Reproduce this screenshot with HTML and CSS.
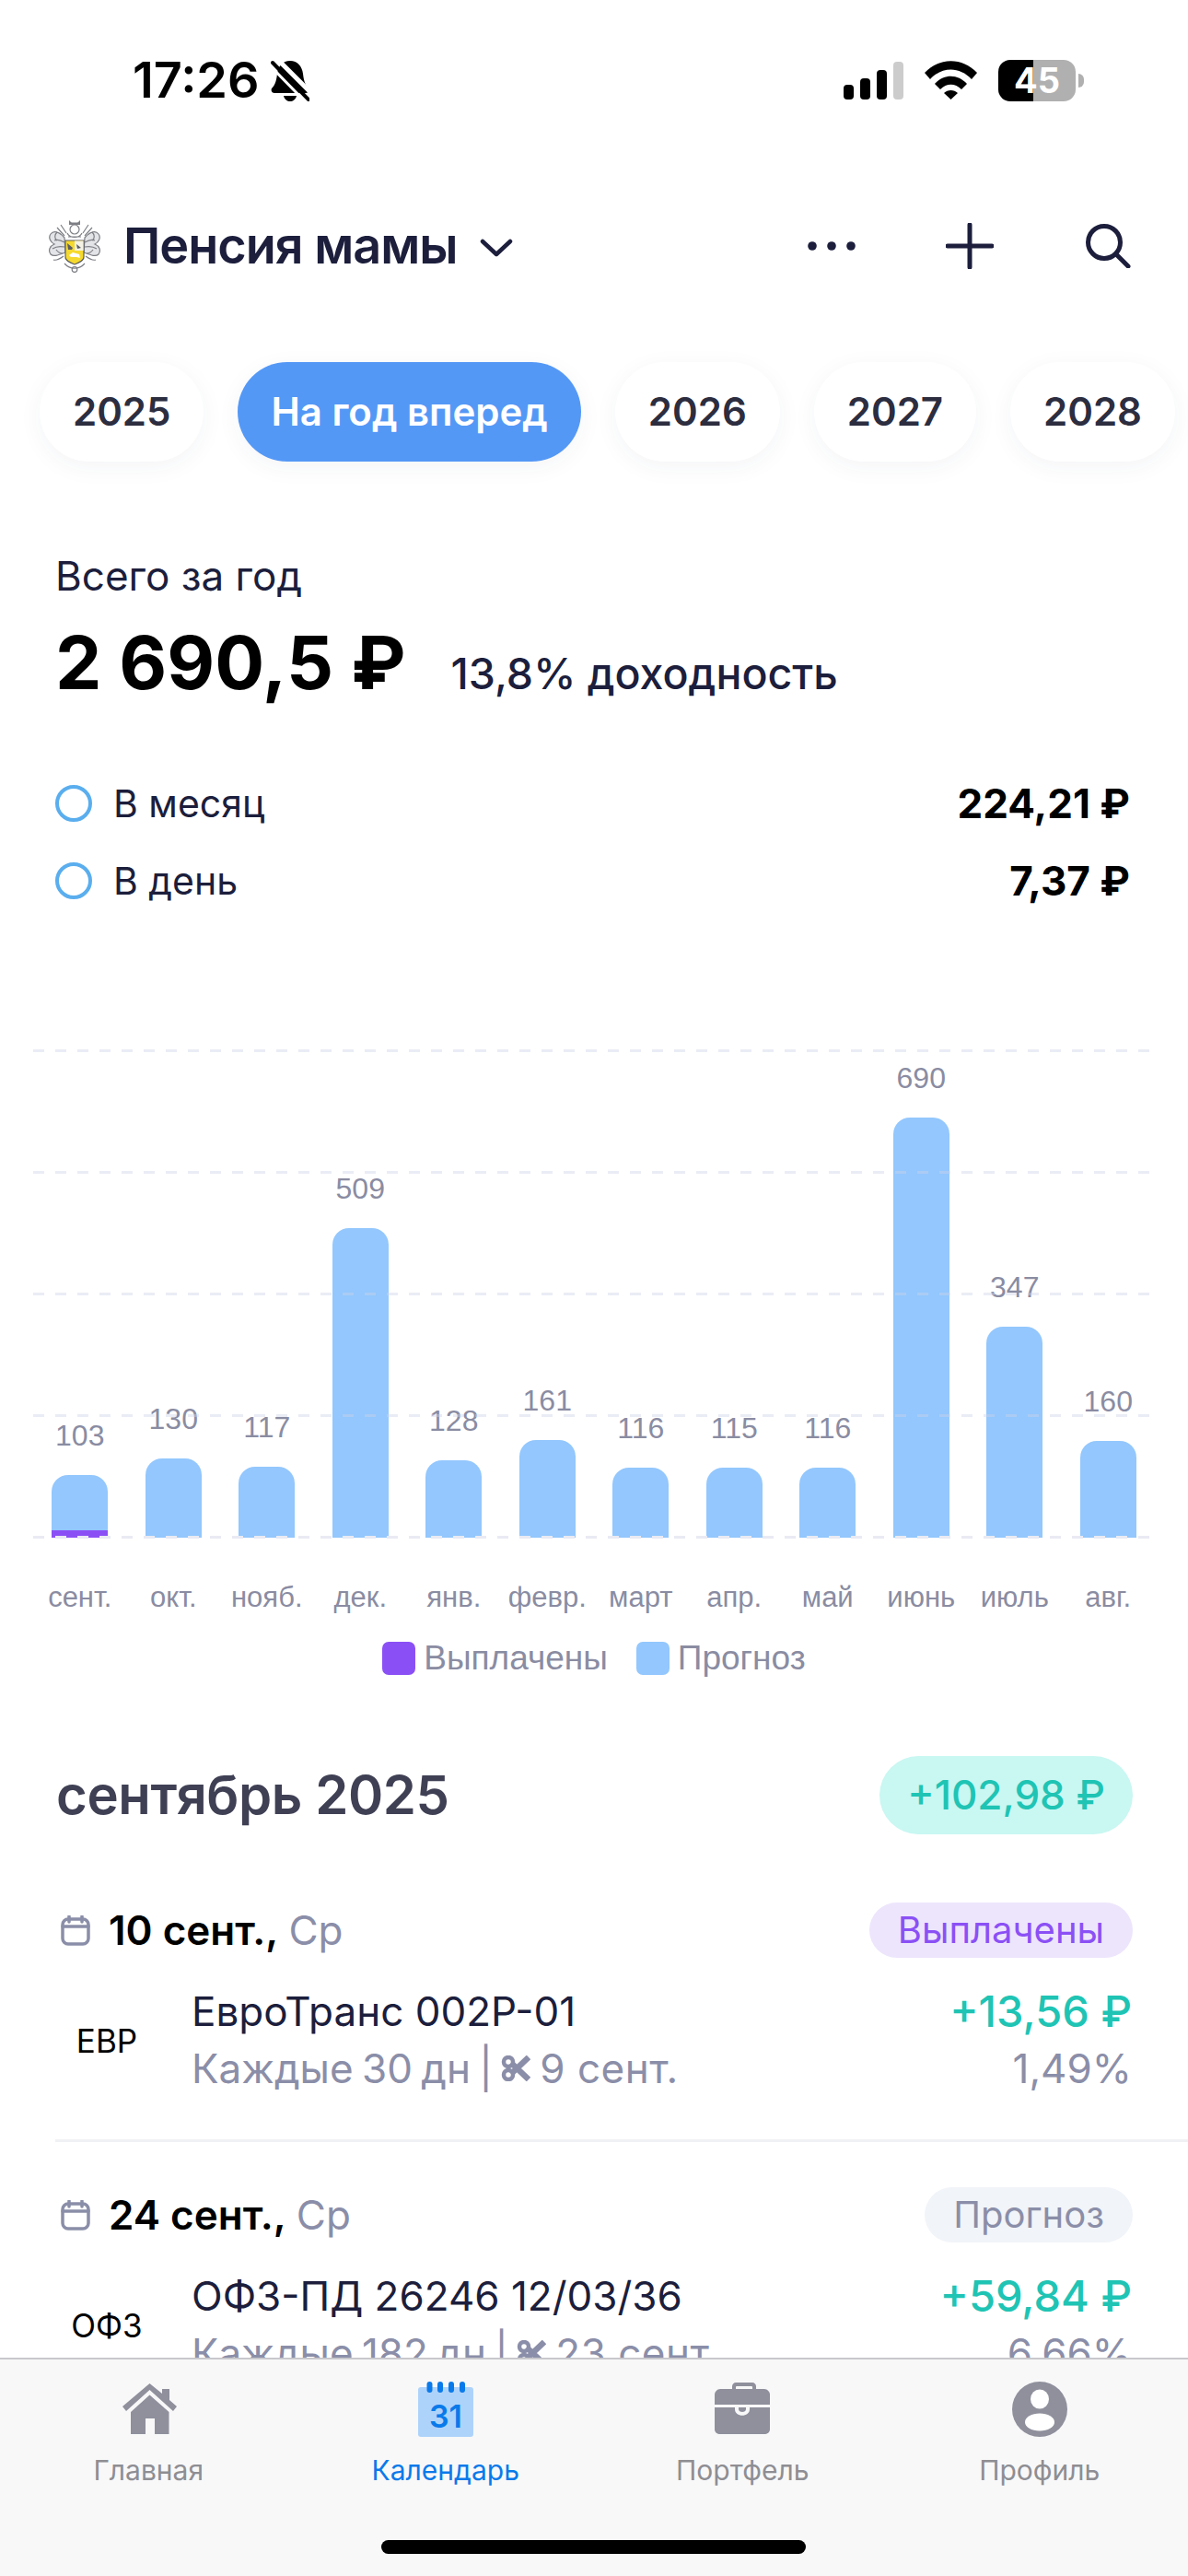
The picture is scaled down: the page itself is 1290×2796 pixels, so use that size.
FILE: index.html
```html
<!DOCTYPE html>
<html lang="ru">
<head>
<meta charset="utf-8">
<title>Пенсия мамы</title>
<link rel="stylesheet" href="styles.css">
</head>
<body>
<div class="app">
  <div class="status">
    <div class="status-left">
      <span class="time">17:26</span>
      <svg class="bell" width="42" height="46" viewBox="0 0 42 46"><path d="M21 1C29 1 34 7 35 15C36 24 38 28 41 31C42 33 41 36 38 36H4C1 36 0 33 1 31C4 28 6 24 7 15C8 7 13 1 21 1Z" fill="#000"/><path d="M14 39H28C27 43 24 45 21 45S15 43 14 39Z" fill="#000"/><path d="M6 -2L46 38" stroke="#fff" stroke-width="5"/><path d="M2 3L41 43" stroke="#000" stroke-width="4" stroke-linecap="round"/><path d="M-1 6L38 46" stroke="#fff" stroke-width="3"/></svg>
    </div>
    <div class="status-right">
      <div class="signal"><i class="s1"></i><i class="s2"></i><i class="s3"></i><i class="s4"></i></div>
      <svg width="57" height="42" viewBox="0 0 57 42"><path d="M0 13C16-4 41-4 57 13L51 20C38 6 19 6 6 20Z M11 25C21 14 36 14 46 25L40 31C33 24 24 24 17 31Z M21 35C25 31 32 31 36 35L28.500 42Z" fill="#000"/></svg>
      <div class="battery"><div class="battery-body"><span>45</span></div><div class="battery-tip"></div></div>
    </div>
  </div>

  <header class="header">
    <div class="account">
      <svg class="logo" width="62" height="58" viewBox="0 0 62 58">
        <g fill="#e3e4e7" stroke="#7d7f85" stroke-width="1.200">
          <path d="M20 20C14 13 8 12 5 16C2 20 5 25 9 27C4 29 2 34 5 38C8 41 13 39 21 36Z"/>
          <path d="M42 20C48 13 54 12 57 16C60 20 57 25 53 27C58 29 60 34 57 38C54 41 49 39 41 36Z"/>
        </g>
        <g fill="none" stroke="#7d7f85" stroke-width="1.200">
          <path d="M20 25C15 22 11 22 9 23M20 30C15 29 10 30 7 32M19 40C15 43 11 45 8 44M12 9L20 18M16 6L22 15"/>
          <path d="M42 25C47 22 51 22 53 23M42 30C47 29 52 30 55 32M43 40C47 43 51 45 54 44M50 9L42 18M46 6L40 15"/>
          <path d="M12 14C9 17 9 21 12 23M50 14C53 17 53 21 50 23M11 33C13 36 16 37 18 37M51 33C49 36 46 37 44 37"/>
          <circle cx="31" cy="11" r="5"/>
          <path d="M23 15C26 21 36 21 39 15M25 4H37M24 19H38"/>
          <path d="M20 48C26 55 36 55 42 48"/>
        </g>
        <path d="M25 1L28 4H34L37 1V6H25Z" fill="#7d7f85"/>
        <circle cx="31" cy="54.500" r="2.800" fill="none" stroke="#7d7f85" stroke-width="1.200"/>
        <path d="M21 23H41V41C41 45 36 47 31 49C26 47 21 45 21 41Z" fill="#f6d92e" stroke="#5c5d62" stroke-width="1.200"/>
        <path d="M31 23.500H40.500V34H31Z" fill="#f4f2e4"/>
        <path d="M23 26L29 31L28 33H24ZM33 27L38 31L34 32Z" fill="#5c5d62"/>
        <path d="M25 39L29 36L36 38L37 42L33 41H27Z" fill="#fff"/>
      </svg>
      <span class="account-name">Пенсия мамы</span>
      <svg class="chevron" width="36" height="20" viewBox="0 0 36 20"><path d="M3 3L18 17L33 3" fill="none" stroke="#1c1e3c" stroke-width="4.500" stroke-linecap="round" stroke-linejoin="round"/></svg>
    </div>
    <div class="actions">
      <svg class="a-dots" width="52" height="10" viewBox="0 0 52 10"><circle cx="5" cy="5" r="4.800" fill="#1c1e3c"/><circle cx="26" cy="5" r="4.800" fill="#1c1e3c"/><circle cx="47" cy="5" r="4.800" fill="#1c1e3c"/></svg>
      <svg class="a-plus" width="52" height="50" viewBox="0 0 52 50"><path d="M26 2V48M2 25H50" stroke="#1c1e3c" stroke-width="5" stroke-linecap="round"/></svg>
      <svg class="a-search" width="50" height="48" viewBox="0 0 50 48"><circle cx="21" cy="20" r="17.500" fill="none" stroke="#1c1e3c" stroke-width="5"/><path d="M34 33L47 46" stroke="#1c1e3c" stroke-width="5" stroke-linecap="round"/></svg>
    </div>
  </header>

  <div class="years">
    <span class="year">2025</span>
    <span class="year year-active">На год вперед</span>
    <span class="year">2026</span>
    <span class="year">2027</span>
    <span class="year">2028</span>
  </div>

  <section class="summary">
    <div class="summary-label">Всего за год</div>
    <div class="summary-total"><span class="amount">2 690,5 ₽</span><span class="yield">13,8% доходность</span></div>
    <div class="metric"><span class="ring"></span><span class="metric-name">В месяц</span><span class="metric-value">224,21 ₽</span></div>
    <div class="metric"><span class="ring"></span><span class="metric-name">В день</span><span class="metric-value">7,37 ₽</span></div>
  </section>

  <section class="chart">
    <div class="plot">
      <div class="grid-lines"><i></i><i></i><i></i><i></i><i class="axis"></i></div>
      <div class="bars">
        <div class="col"><span class="val">103</span><div class="bar" style="height:68px"><div class="paid"></div></div></div>
        <div class="col"><span class="val">130</span><div class="bar" style="height:86px"></div></div>
        <div class="col"><span class="val">117</span><div class="bar" style="height:77px"></div></div>
        <div class="col"><span class="val">509</span><div class="bar" style="height:336px"></div></div>
        <div class="col"><span class="val">128</span><div class="bar" style="height:84px"></div></div>
        <div class="col"><span class="val">161</span><div class="bar" style="height:106px"></div></div>
        <div class="col"><span class="val">116</span><div class="bar" style="height:76px"></div></div>
        <div class="col"><span class="val">115</span><div class="bar" style="height:76px"></div></div>
        <div class="col"><span class="val">116</span><div class="bar" style="height:76px"></div></div>
        <div class="col"><span class="val">690</span><div class="bar" style="height:456px"></div></div>
        <div class="col"><span class="val">347</span><div class="bar" style="height:229px"></div></div>
        <div class="col"><span class="val">160</span><div class="bar" style="height:105px"></div></div>
      </div>
    </div>
    <div class="months">
      <span>сент.</span><span>окт.</span><span>нояб.</span><span>дек.</span><span>янв.</span><span>февр.</span><span>март</span><span>апр.</span><span>май</span><span>июнь</span><span>июль</span><span>авг.</span>
    </div>
    <div class="legend">
      <i class="swatch swatch-paid"></i><span>Выплачены</span>
      <i class="swatch swatch-fore"></i><span>Прогноз</span>
    </div>
  </section>

  <section class="month">
    <div class="month-head">
      <h2 class="month-title">сентябрь 2025</h2>
      <span class="month-sum">+102,98 ₽</span>
    </div>

    <div class="day-head first">
      <div class="day">
        <svg class="cal" width="32" height="33" viewBox="0 0 32 33"><rect x="2" y="4" width="28" height="27" rx="6" fill="none" stroke="#8b8ea8" stroke-width="3.500"/><path d="M2 12H30M9 1V7M23 1V7" stroke="#8b8ea8" stroke-width="3.500" stroke-linecap="round"/></svg>
        <span class="day-date">10 сент.,</span><span class="day-week">Ср</span>
      </div>
      <span class="tag tag-paid">Выплачены</span>
    </div>
    <div class="item">
      <span class="ticker">ЕВР</span>
      <div class="item-main">
        <div class="item-name">ЕвроТранс 002Р-01</div>
        <div class="item-sub">Каждые 30 дн | <svg class="cut" width="32" height="28" viewBox="0 0 32 28"><path d="M11 8L30 26M11 20L30 2" stroke="#8b8ea8" stroke-width="6.500"/><circle cx="8" cy="7" r="5" fill="none" stroke="#8b8ea8" stroke-width="4.500"/><circle cx="8" cy="21" r="5" fill="none" stroke="#8b8ea8" stroke-width="4.500"/></svg><span class="sub-date">9 сент.</span></div>
      </div>
      <div class="item-side">
        <div class="item-amount">+13,56 ₽</div>
        <div class="item-pct">1,49%</div>
      </div>
    </div>
    <div class="divider"></div>

    <div class="day-head">
      <div class="day">
        <svg class="cal" width="32" height="33" viewBox="0 0 32 33"><rect x="2" y="4" width="28" height="27" rx="6" fill="none" stroke="#8b8ea8" stroke-width="3.500"/><path d="M2 12H30M9 1V7M23 1V7" stroke="#8b8ea8" stroke-width="3.500" stroke-linecap="round"/></svg>
        <span class="day-date">24 сент.,</span><span class="day-week">Ср</span>
      </div>
      <span class="tag tag-fore">Прогноз</span>
    </div>
    <div class="item">
      <span class="ticker">ОФЗ</span>
      <div class="item-main">
        <div class="item-name">ОФЗ-ПД 26246 12/03/36</div>
        <div class="item-sub">Каждые 182 дн | <svg class="cut" width="32" height="28" viewBox="0 0 32 28"><path d="M11 8L30 26M11 20L30 2" stroke="#8b8ea8" stroke-width="6.500"/><circle cx="8" cy="7" r="5" fill="none" stroke="#8b8ea8" stroke-width="4.500"/><circle cx="8" cy="21" r="5" fill="none" stroke="#8b8ea8" stroke-width="4.500"/></svg><span class="sub-date">23 сент.</span></div>
      </div>
      <div class="item-side">
        <div class="item-amount">+59,84 ₽</div>
        <div class="item-pct">6,66%</div>
      </div>
    </div>
  </section>

  <nav class="tabbar">
    <div class="tab">
      <svg class="home-icon" width="60" height="60" viewBox="0 0 60 60"><path d="M0 27L29.500 2L43 13V8H51V20L59 27L55 32L29.500 9L4 32Z M9 33L29.500 14.500L50.500 33V57H35V40H25V57H9Z" fill="#8f909c"/></svg>
      <span class="tab-label">Главная</span>
    </div>
    <div class="tab tab-active">
      <svg width="60" height="60" viewBox="0 0 60 60"><rect x="0" y="6" width="60" height="54" rx="3" fill="#aed3fb"/><g fill="#0a7aea"><rect x="9.500" y="0" width="6" height="12" rx="3"/><rect x="21" y="0" width="6" height="12" rx="3"/><rect x="33" y="0" width="6" height="12" rx="3"/><rect x="45" y="0" width="6" height="12" rx="3"/></g><text class="cal-num" x="30" y="50" text-anchor="middle">31</text></svg>
      <span class="tab-label">Календарь</span>
    </div>
    <div class="tab">
      <svg width="60" height="60" viewBox="0 0 60 60"><path d="M19 10V5C19 3 21 1 23 1H41C43 1 45 3 45 5V10H41V6C41 5.500 40.500 5 40 5H24C23.500 5 23 5.500 23 6V10Z" fill="#8f909c"/><path d="M6 8H54C57 8 60 11 60 14V25H0V14C0 11 3 8 6 8Z" fill="#8f909c"/><path d="M0 28H22V30C22 39 38 39 38 30V28H60V52C60 55 57 57 54 57H6C3 57 0 55 0 52Z" fill="#8f909c"/><path d="M26 28H34V30C34 34 26 34 26 30Z" fill="#8f909c"/></svg>
      <span class="tab-label">Портфель</span>
    </div>
    <div class="tab">
      <svg width="60" height="60" viewBox="0 0 60 60"><circle cx="30" cy="30" r="30" fill="#8f909c"/><ellipse cx="30" cy="19" rx="10" ry="10.500" fill="#fff"/><ellipse cx="30" cy="44" rx="16" ry="9.500" fill="#fff"/></svg>
      <span class="tab-label">Профиль</span>
    </div>
    <div class="home-indicator"></div>
  </nav>
</div>
</body>
</html>
```

FILE: styles.css
```css
* { box-sizing: border-box; }
html, body { margin: 0; padding: 0; background: #fff; }
body { font-family: Inter, "Noto Sans", sans-serif; color: #1c1e3c; }
.app { position: relative; width: 1290px; height: 2796px; overflow: hidden; background: #fff; }

/* status bar */
.status { height: 174px; display: flex; align-items: center; justify-content: space-between; padding: 0 113px 0 144px; }
.status-left { display: flex; align-items: center; gap: 12px; }
.time { font-size: 54px; font-weight: 600; color: #000; line-height: 60px; }
.bell { overflow: hidden; margin-top: 2px; }
.status-right { display: flex; align-items: center; gap: 23px; }
.signal { display: flex; align-items: flex-end; gap: 7px; height: 41px; }
.signal i { display: block; width: 11px; border-radius: 4px; background: #000; }
.s1 { height: 16px; }
.s2 { height: 23px; }
.s3 { height: 32px; }
.signal .s4 { height: 41px; background: #ccc; }
.battery { display: flex; align-items: center; gap: 3px; }
.battery-body { width: 84px; height: 45px; border-radius: 13px; display: flex; align-items: center; justify-content: center; background: linear-gradient(90deg, #000 45%, #b0b0b0 45%); }
.battery-body span { color: #fff; font-size: 38px; font-weight: 700; line-height: 45px; }
.battery-tip { width: 6px; height: 15px; border-radius: 0 6px 6px 0; background: #b0b0b0; }

/* header */
.header { height: 186px; display: flex; align-items: center; justify-content: space-between; padding: 0 62px 0 50px; }
.account { display: flex; align-items: center; }
.logo { margin-right: 22px; }
.account-name { font-size: 54px; font-weight: 600; line-height: 64px; letter-spacing: -1px; }
.chevron { margin-left: 24px; margin-top: 4px; }
.actions { display: flex; align-items: center; }
.a-plus { margin-left: 98px; }
.a-search { margin-left: 99px; }

/* year pills */
.years { display: flex; gap: 37px; padding: 33px 0 0 43px; }
.year { flex: none; height: 108px; padding: 0 36px; border-radius: 54px; background: #fff; box-shadow: 0 6px 26px rgba(40, 50, 90, 0.05); font-size: 42px; font-weight: 600; line-height: 108px; color: #2c2d3f; }
.year-active { background: #5498f6; color: #fff; }

/* summary */
.summary { padding: 99px 63px 0 60px; }
.summary-label { font-size: 44px; line-height: 50px; }
.summary-total { display: flex; align-items: baseline; gap: 49px; margin-top: 19px; height: 100px; }
.amount { font-size: 80px; font-weight: 700; line-height: 100px; color: #000; }
.yield { font-size: 46.500px; font-weight: 500; }
.metric { display: flex; align-items: center; height: 84px; }
.summary-total + .metric { margin-top: 61px; }
.ring { width: 40px; height: 40px; border: 4px solid #5aaeee; border-radius: 50%; margin-right: 23px; }
.metric-name { flex: 1; font-size: 41px; }
.metric-value { font-size: 44px; font-weight: 700; color: #000; }

/* chart */
.chart { margin-top: 141px; padding-left: 36px; width: 1254px; }
.plot { position: relative; height: 531px; }
.grid-lines { position: absolute; z-index: 2; inset: 0 6px 0 0; display: flex; flex-direction: column; justify-content: space-between; }
.grid-lines i { display: block; height: 3px; background: repeating-linear-gradient(90deg, rgba(205, 210, 232, 0.42) 0 12px, transparent 12px 24px); }
.grid-lines .axis { background: repeating-linear-gradient(90deg, #e9eaf3 0 12px, transparent 12px 24px); }
.bars { display: grid; grid-template-columns: repeat(12, 1fr); height: 530px; align-items: end; }
.col { display: flex; flex-direction: column; align-items: center; }
.val { font-family: "Liberation Sans", Arial, sans-serif; font-size: 32px; line-height: 36px; margin-bottom: 25px; color: #8a8ca2; }
.bar { position: relative; width: 61px; border-radius: 18px 18px 0 0; background: #93c7fd; display: flex; align-items: flex-end; }
.paid { width: 100%; height: 8px; background: #8b50f5; }
.months { display: grid; grid-template-columns: repeat(12, 1fr); margin-top: 44px; }
.months span { text-align: center; font-family: "Liberation Sans", Arial, sans-serif; font-size: 31px; line-height: 40px; color: #8a8ca2; }
.legend { display: flex; align-items: center; justify-content: center; margin-top: 24px; height: 44px; font-family: "Liberation Sans", Arial, sans-serif; font-size: 37px; color: #8a8ca2; }
.swatch { display: block; width: 36px; height: 36px; border-radius: 7px; margin-right: 9px; }
.swatch-paid { background: #8b50f5; }
.swatch-fore { background: #93c7fd; margin-left: 31px; }

/* month list */
.month { padding-top: 84px; }
.month-head { display: flex; align-items: center; justify-content: space-between; padding: 0 60px 0 61px; height: 85px; }
.month-title { margin: 0; font-size: 58px; font-weight: 600; line-height: 85px; letter-spacing: -0.4px; color: #3f4054; }
.month-sum { height: 85px; padding: 0 30px; border-radius: 43px; background: #c9f7f2; color: #1fc4b4; font-size: 44px; font-weight: 500; line-height: 85px; }
.day-head { display: flex; align-items: center; justify-content: space-between; padding: 0 60px 0 66px; height: 60px; margin-top: 49px; }
.day-head.first { margin-top: 74px; }
.day { display: flex; align-items: center; font-size: 44px; }
.cal { margin-right: 20px; }
.day-date { font-weight: 600; color: #000; }
.day-week { margin-left: 11px; color: #8b8ea8; }
.tag { height: 60px; padding: 0 31px; border-radius: 30px; font-size: 40px; line-height: 60px; }
.tag-paid { background: #ede5fc; color: #8b50f5; }
.tag-fore { background: #f1f4f8; color: #8b8ea8; }
.item { display: flex; align-items: center; margin-top: 28px; padding: 0 61px 0 62px; height: 124px; }
.ticker { flex: none; width: 108px; margin-right: 38px; text-align: center; font-size: 35px; color: #000; }
.item-main { flex: 1; }
.item-name { font-size: 44px; line-height: 60px; }
.item-sub { font-size: 44px; line-height: 64px; color: #8b8ea8; display: flex; align-items: center; white-space: pre; word-spacing: -3px; }
.sub-date { margin-left: 10px; word-spacing: 0; letter-spacing: 0.5px; }
.item-side { text-align: right; }
.item-amount { font-size: 47px; font-weight: 500; line-height: 60px; color: #1fc4b4; }
.item-pct { font-size: 44px; line-height: 64px; color: #8b8ea8; }
.divider { height: 3px; margin: 45px 0 0 60px; background: #f0f1f4; }

/* tab bar */
.tabbar { position: absolute; z-index: 3; left: 0; right: 0; bottom: 0; height: 237px; border-top: 2px solid #c8c8cc; background: #f8f8f9; display: grid; grid-template-columns: repeat(4, 1fr); align-items: start; padding-top: 24px; }
.tab { display: flex; flex-direction: column; align-items: center; }
.home-icon { margin-left: 4px; }
.tab-label { margin-top: 16px; font-size: 30px; line-height: 40px; color: #8e8e93; }
.tab-active .tab-label { color: #0a7aea; }
.cal-num { font-family: Inter, sans-serif; font-size: 34px; font-weight: 600; fill: #0a7aea; }
.home-indicator { position: absolute; left: 414px; top: 196px; width: 461px; height: 15px; border-radius: 8px; background: #000; }
```
